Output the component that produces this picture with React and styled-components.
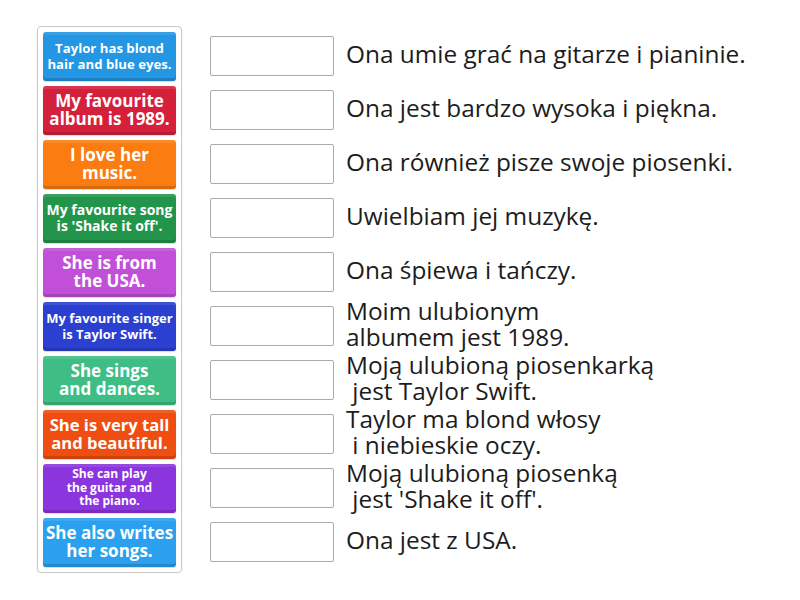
import React from "react";
import styled, { createGlobalStyle } from "styled-components";

const Global = createGlobalStyle`
  html, body { margin: 0; padding: 0; background: #fff; }
  body { font-family: "Open Sans", "Noto Sans", sans-serif; }
`;

const Page = styled.div`
  display: flex;
  align-items: flex-start;
  gap: 28px;
  padding: 26px 0 0 37px;
`;

const Panel = styled.div`
  display: flex;
  flex-direction: column;
  gap: 5px;
  padding: 5px;
  border: 1px solid #c9c9c9;
  border-radius: 4px;
  box-shadow: 0 1px 2px rgba(0, 0, 0, 0.08);
`;

const Tile = styled.div`
  width: 133px;
  height: 49px;
  box-sizing: border-box;
  display: flex;
  align-items: center;
  justify-content: center;
  text-align: center;
  padding: 0 2px 2px;
  border-radius: 3px;
  background: ${(p) => p.$bg};
  box-shadow: inset 0 -3px 0 rgba(0, 0, 0, 0.14), inset 0 3px 0 rgba(255, 255, 255, 0.1),
    0 1px 1px rgba(0, 0, 0, 0.15);
  color: #fff;
  font-weight: 700;
  font-size: ${(p) => p.$fs}px;
  line-height: ${(p) => p.$lh}px;
  white-space: nowrap;
`;

const Answers = styled.div`
  display: flex;
  flex-direction: column;
  gap: 14px;
  margin-top: 10px;
`;

const Row = styled.div`
  display: flex;
  align-items: center;
  gap: 12px;
  height: 40px;
`;

const Slot = styled.div`
  width: 124px;
  height: 40px;
  box-sizing: border-box;
  border: 1px solid #ababab;
  border-radius: 2px;
  flex: none;
`;

const Text = styled.div`
  font-size: 24.4px;
  line-height: 26px;
  padding-bottom: 4px;
  color: #1c1c1c;
  white-space: pre;
`;

const tiles = [
  { bg: "#2396e4", fs: 13.2, lh: 16, t: ["Taylor has blond", "hair and blue eyes."] },
  { bg: "#d5203c", fs: 17, lh: 18, t: ["My favourite", "album is 1989."] },
  { bg: "#fb7c10", fs: 17, lh: 18, t: ["I love her", "music."] },
  { bg: "#23954b", fs: 14, lh: 16, t: ["My favourite song", "is 'Shake it off'."] },
  { bg: "#c14fd8", fs: 17, lh: 18, t: ["She is from", "the USA."] },
  { bg: "#2b3fd0", fs: 13, lh: 16, t: ["My favourite singer", "is Taylor Swift."] },
  { bg: "#3ebd84", fs: 17, lh: 18, t: ["She sings", "and dances."] },
  { bg: "#f04d13", fs: 16.6, lh: 18, t: ["She is very tall", "and beautiful."] },
  { bg: "#8b35de", fs: 12, lh: 13.5, t: ["She can play", "the guitar and", "the piano."] },
  { bg: "#2aa0ee", fs: 17, lh: 18, t: ["She also writes", "her songs."] },
];

const answers = [
  ["Ona umie grać na gitarze i pianinie."],
  ["Ona jest bardzo wysoka i piękna."],
  ["Ona również pisze swoje piosenki."],
  ["Uwielbiam jej muzykę."],
  ["Ona śpiewa i tańczy."],
  ["Moim ulubionym", "albumem jest 1989."],
  ["Moją ulubioną piosenkarką", " jest Taylor Swift."],
  ["Taylor ma blond włosy", " i niebieskie oczy."],
  ["Moją ulubioną piosenką", " jest 'Shake it off'."],
  ["Ona jest z USA."],
];

const Lines = ({ lines }) =>
  lines.map((l, i) => (
    <React.Fragment key={i}>
      {i > 0 && <br />}
      {l}
    </React.Fragment>
  ));

export default function App() {
  return (
    <>
      <Global />
      <Page>
        <Panel>
          {tiles.map((t, i) => (
            <Tile key={i} $bg={t.bg} $fs={t.fs} $lh={t.lh}>
              <span>
                <Lines lines={t.t} />
              </span>
            </Tile>
          ))}
        </Panel>
        <Answers>
          {answers.map((a, i) => (
            <Row key={i}>
              <Slot />
              <Text>
                <Lines lines={a} />
              </Text>
            </Row>
          ))}
        </Answers>
      </Page>
    </>
  );
}
